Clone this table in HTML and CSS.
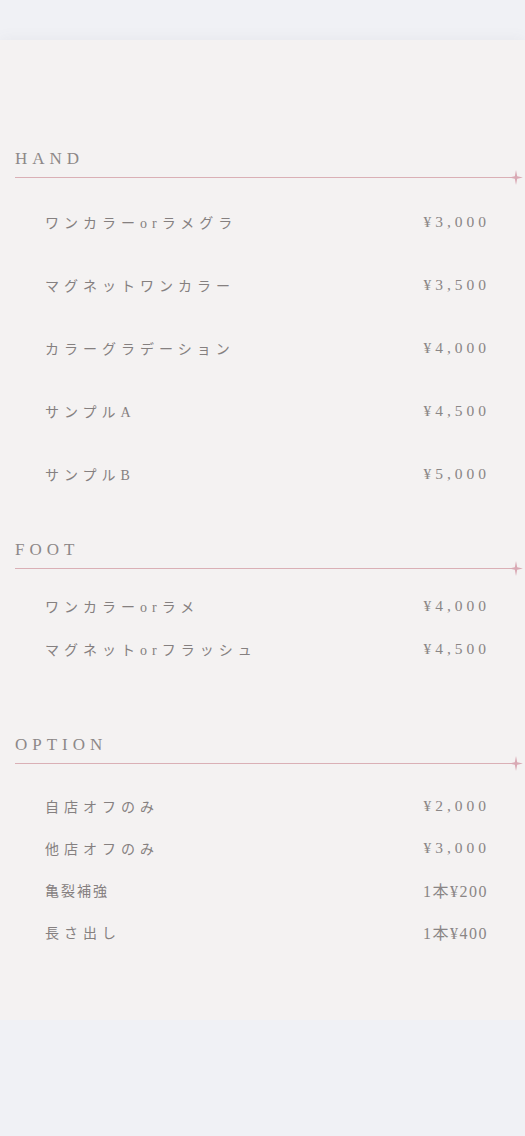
FILE: index.html
```html
<!DOCTYPE html>
<html lang="ja">

<head>
    <meta charset="UTF-8">
    <meta name="viewport" content="width=device-width, initial-scale=1.0">
    <title>Price Menu</title>
    <link rel="stylesheet" href="styles.css">
</head>

<body>
    <div class="menu">
        <section class="section hand">
            <h2 class="section-title">HAND</h2>
            <div class="rule">
                <span class="rule-line"></span>
                <svg class="star" width="14" height="15" viewBox="0 0 14 15"><path d="M7 0 L8.2 6.3 L14 7.5 L8.2 8.7 L7 15 L5.8 8.7 L0 7.5 L5.8 6.3 Z"/></svg>
            </div>
            <ul class="items">
                <li class="item"><span class="name">ワンカラーorラメグラ</span><span class="price">¥3,000</span></li>
                <li class="item"><span class="name">マグネットワンカラー</span><span class="price">¥3,500</span></li>
                <li class="item"><span class="name">カラーグラデーション</span><span class="price">¥4,000</span></li>
                <li class="item"><span class="name">サンプルA</span><span class="price">¥4,500</span></li>
                <li class="item"><span class="name">サンプルB</span><span class="price">¥5,000</span></li>
            </ul>
        </section>

        <section class="section foot">
            <h2 class="section-title">FOOT</h2>
            <div class="rule">
                <span class="rule-line"></span>
                <svg class="star" width="14" height="15" viewBox="0 0 14 15"><path d="M7 0 L8.2 6.3 L14 7.5 L8.2 8.7 L7 15 L5.8 8.7 L0 7.5 L5.8 6.3 Z"/></svg>
            </div>
            <ul class="items">
                <li class="item"><span class="name">ワンカラーorラメ</span><span class="price">¥4,000</span></li>
                <li class="item"><span class="name">マグネットorフラッシュ</span><span class="price">¥4,500</span></li>
            </ul>
        </section>

        <section class="section option">
            <h2 class="section-title">OPTION</h2>
            <div class="rule">
                <span class="rule-line"></span>
                <svg class="star" width="14" height="15" viewBox="0 0 14 15"><path d="M7 0 L8.2 6.3 L14 7.5 L8.2 8.7 L7 15 L5.8 8.7 L0 7.5 L5.8 6.3 Z"/></svg>
            </div>
            <ul class="items">
                <li class="item"><span class="name">自店オフのみ</span><span class="price">¥2,000</span></li>
                <li class="item"><span class="name">他店オフのみ</span><span class="price">¥3,000</span></li>
                <li class="item"><span class="name kanji">亀裂補強</span><span class="price tight">1本¥200</span></li>
                <li class="item"><span class="name">長さ出し</span><span class="price tight">1本¥400</span></li>
            </ul>
        </section>
    </div>
</body>

</html>
```

FILE: styles.css
```css
body {
    margin: 0;
    padding: 40px 0 0;
    background-color: #f0f1f5;
    font-family: 'Liberation Serif', 'Noto Sans CJK JP', serif;
    color: #8a8686;
}

.menu {
    background-color: #f4f2f2;
    padding: 107px 0 67px;
    box-shadow: 0 0 14px rgba(120, 120, 130, 0.08);
}

.section-title {
    margin: 0 0 0 15px;
    font-size: 17px;
    font-weight: normal;
    line-height: 24px;
    letter-spacing: 5px;
    color: #8d8888;
}

.rule {
    display: flex;
    align-items: center;
    height: 15px;
    margin: -1px 2px 0 15px;
}

.rule-line {
    flex: 1;
    height: 1px;
    background-color: #dab0b6;
}

.star {
    fill: #d9a9b4;
    margin-left: -2px;
}

.items {
    list-style: none;
    margin: 0;
    padding: 0 35px 0 45px;
}

.item {
    display: flex;
    justify-content: space-between;
    align-items: center;
}

.hand .items {
    margin-top: 5px;
}

.hand .item {
    height: 63px;
}

.foot {
    margin-top: 33px;
}

.foot .items {
    margin-top: 8px;
}

.foot .item {
    height: 43px;
}

.option {
    margin-top: 63px;
}

.option .items {
    margin-top: 14px;
}

.option .item {
    height: 42px;
}

.name {
    font-size: 14px;
    letter-spacing: 5px;
    color: #858080;
}

.name.kanji {
    letter-spacing: 2px;
}

.price {
    font-size: 15.5px;
    letter-spacing: 4px;
    color: #8a8686;
}

.price.tight {
    font-size: 16px;
    letter-spacing: 1.5px;
    margin-right: 2px;
}
```
